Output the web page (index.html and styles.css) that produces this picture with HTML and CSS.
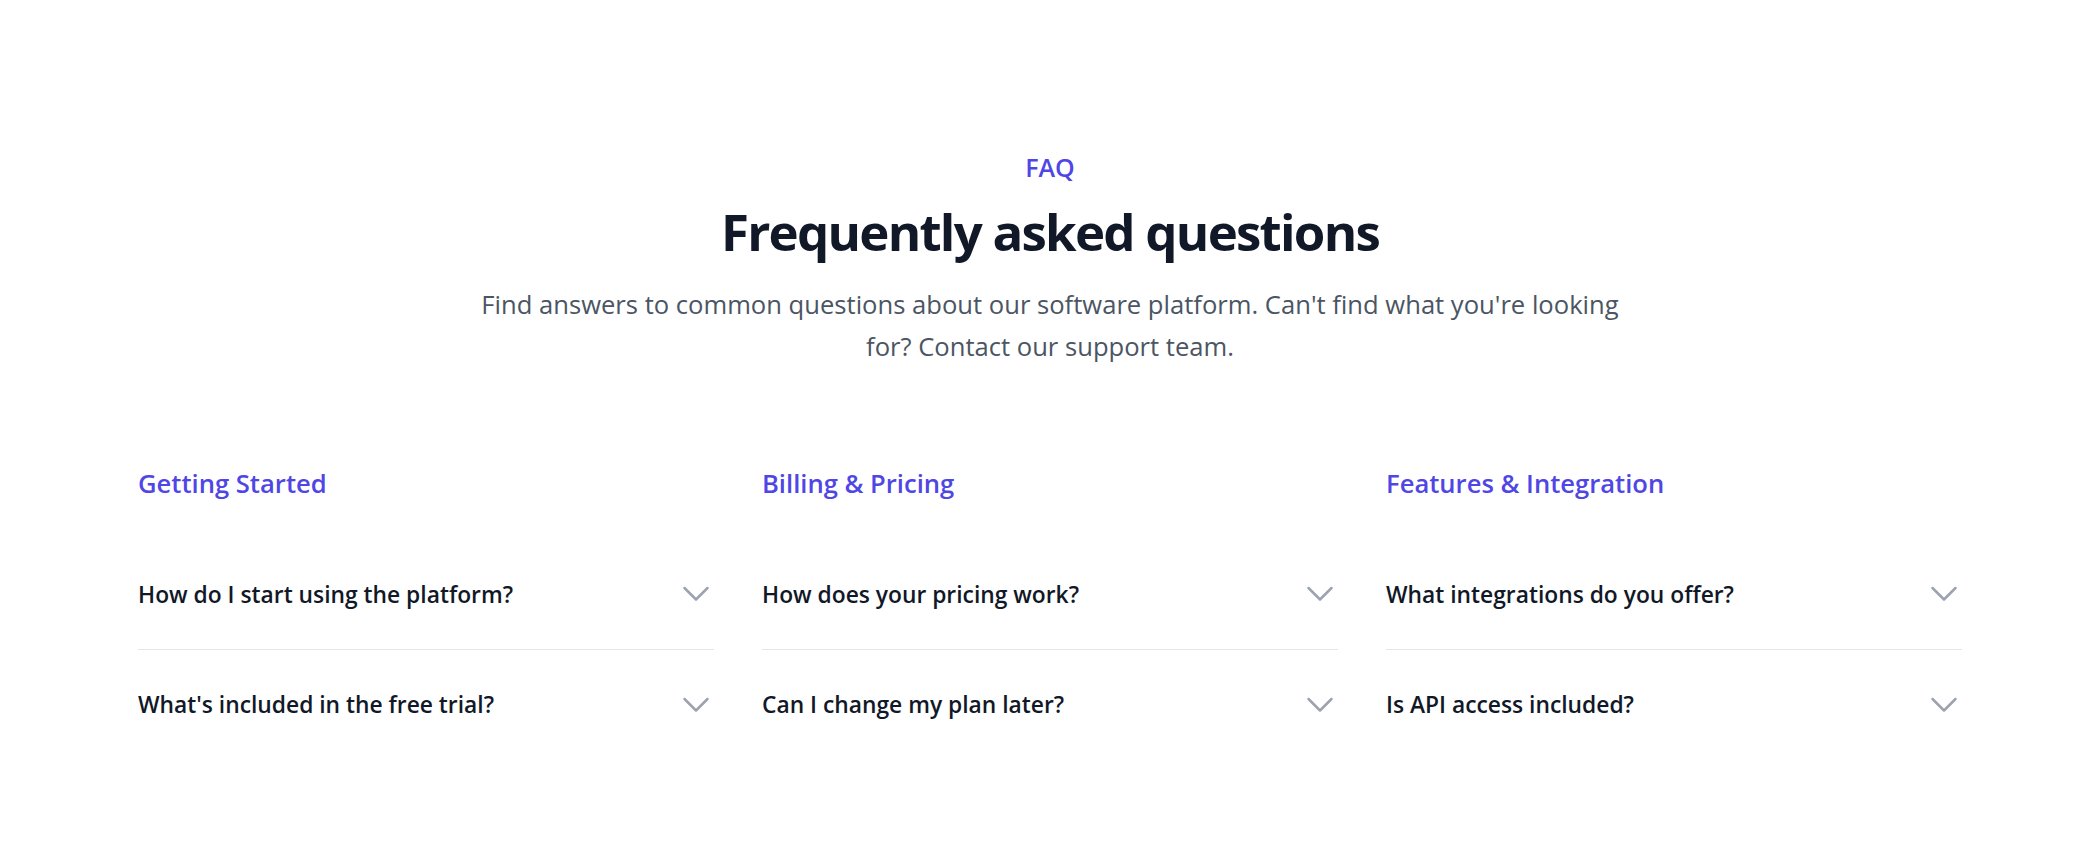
FILE: index.html
```html
<!DOCTYPE html>
<html lang="en">
<head>
<meta charset="utf-8">
<title>FAQ</title>
<link rel="stylesheet" href="styles.css">
</head>
<body>
<section class="faq">
  <header class="intro">
    <p class="eyebrow">FAQ</p>
    <h2 class="title">Frequently asked questions</h2>
    <p class="lead">Find answers to common questions about our software platform. Can't find what you're looking for? Contact our support team.</p>
  </header>
  <div class="columns">
    <div class="group">
      <h3 class="group-title">Getting Started</h3>
      <div class="item">
        <span class="question">How do I start using the platform?</span>
        <svg class="chev" viewBox="0 0 32 32"><path d="M4.5 10 L16 21.5 L27.5 10"/></svg>
      </div>
      <div class="item">
        <span class="question">What's included in the free trial?</span>
        <svg class="chev" viewBox="0 0 32 32"><path d="M4.5 10 L16 21.5 L27.5 10"/></svg>
      </div>
    </div>
    <div class="group">
      <h3 class="group-title">Billing &amp; Pricing</h3>
      <div class="item">
        <span class="question">How does your pricing work?</span>
        <svg class="chev" viewBox="0 0 32 32"><path d="M4.5 10 L16 21.5 L27.5 10"/></svg>
      </div>
      <div class="item">
        <span class="question">Can I change my plan later?</span>
        <svg class="chev" viewBox="0 0 32 32"><path d="M4.5 10 L16 21.5 L27.5 10"/></svg>
      </div>
    </div>
    <div class="group">
      <h3 class="group-title">Features &amp; Integration</h3>
      <div class="item">
        <span class="question">What integrations do you offer?</span>
        <svg class="chev" viewBox="0 0 32 32"><path d="M4.5 10 L16 21.5 L27.5 10"/></svg>
      </div>
      <div class="item">
        <span class="question">Is API access included?</span>
        <svg class="chev" viewBox="0 0 32 32"><path d="M4.5 10 L16 21.5 L27.5 10"/></svg>
      </div>
    </div>
  </div>
</section>
</body>
</html>
```
FILE: styles.css
```css
* { box-sizing: border-box; }
html, body { margin: 0; padding: 0; background: #ffffff; }
body {
  font-family: "Open Sans", "Noto Sans", sans-serif;
  color: #111827;
}
.faq {
  padding: 148px 138px 0;
}
.intro {
  text-align: center;
}
.eyebrow {
  margin: 0;
  font-size: 25px;
  line-height: 38px;
  font-weight: 600;
  color: #4f46e5;
}
.title {
  margin: 17px 0 0;
  font-size: 51px;
  line-height: 56px;
  font-weight: 700;
  color: #111827;
  letter-spacing: -1.75px;
}
.lead {
  margin: 25px auto 0;
  max-width: 1165px;
  font-size: 25.6px;
  line-height: 42px;
  color: #4b5563;
}
.columns {
  margin-top: 97px;
  display: grid;
  grid-template-columns: repeat(3, 1fr);
  column-gap: 48px;
}
.group-title {
  margin: 0 0 36px;
  font-size: 25.6px;
  line-height: 38px;
  font-weight: 600;
  color: #4f46e5;
}
.item {
  height: 110px;
  display: flex;
  align-items: center;
  justify-content: space-between;
}
.item + .item {
  border-top: 1.3px solid #e5e7eb;
}
.question {
  font-size: 22.8px;
  line-height: 37px;
  font-weight: 600;
  color: #111827;
}
.chev {
  width: 32px;
  height: 32px;
  margin-right: 2px;
  flex: none;
  fill: none;
  stroke: #9ca3af;
  stroke-width: 2.5;
  stroke-linecap: round;
  stroke-linejoin: round;
}
```
